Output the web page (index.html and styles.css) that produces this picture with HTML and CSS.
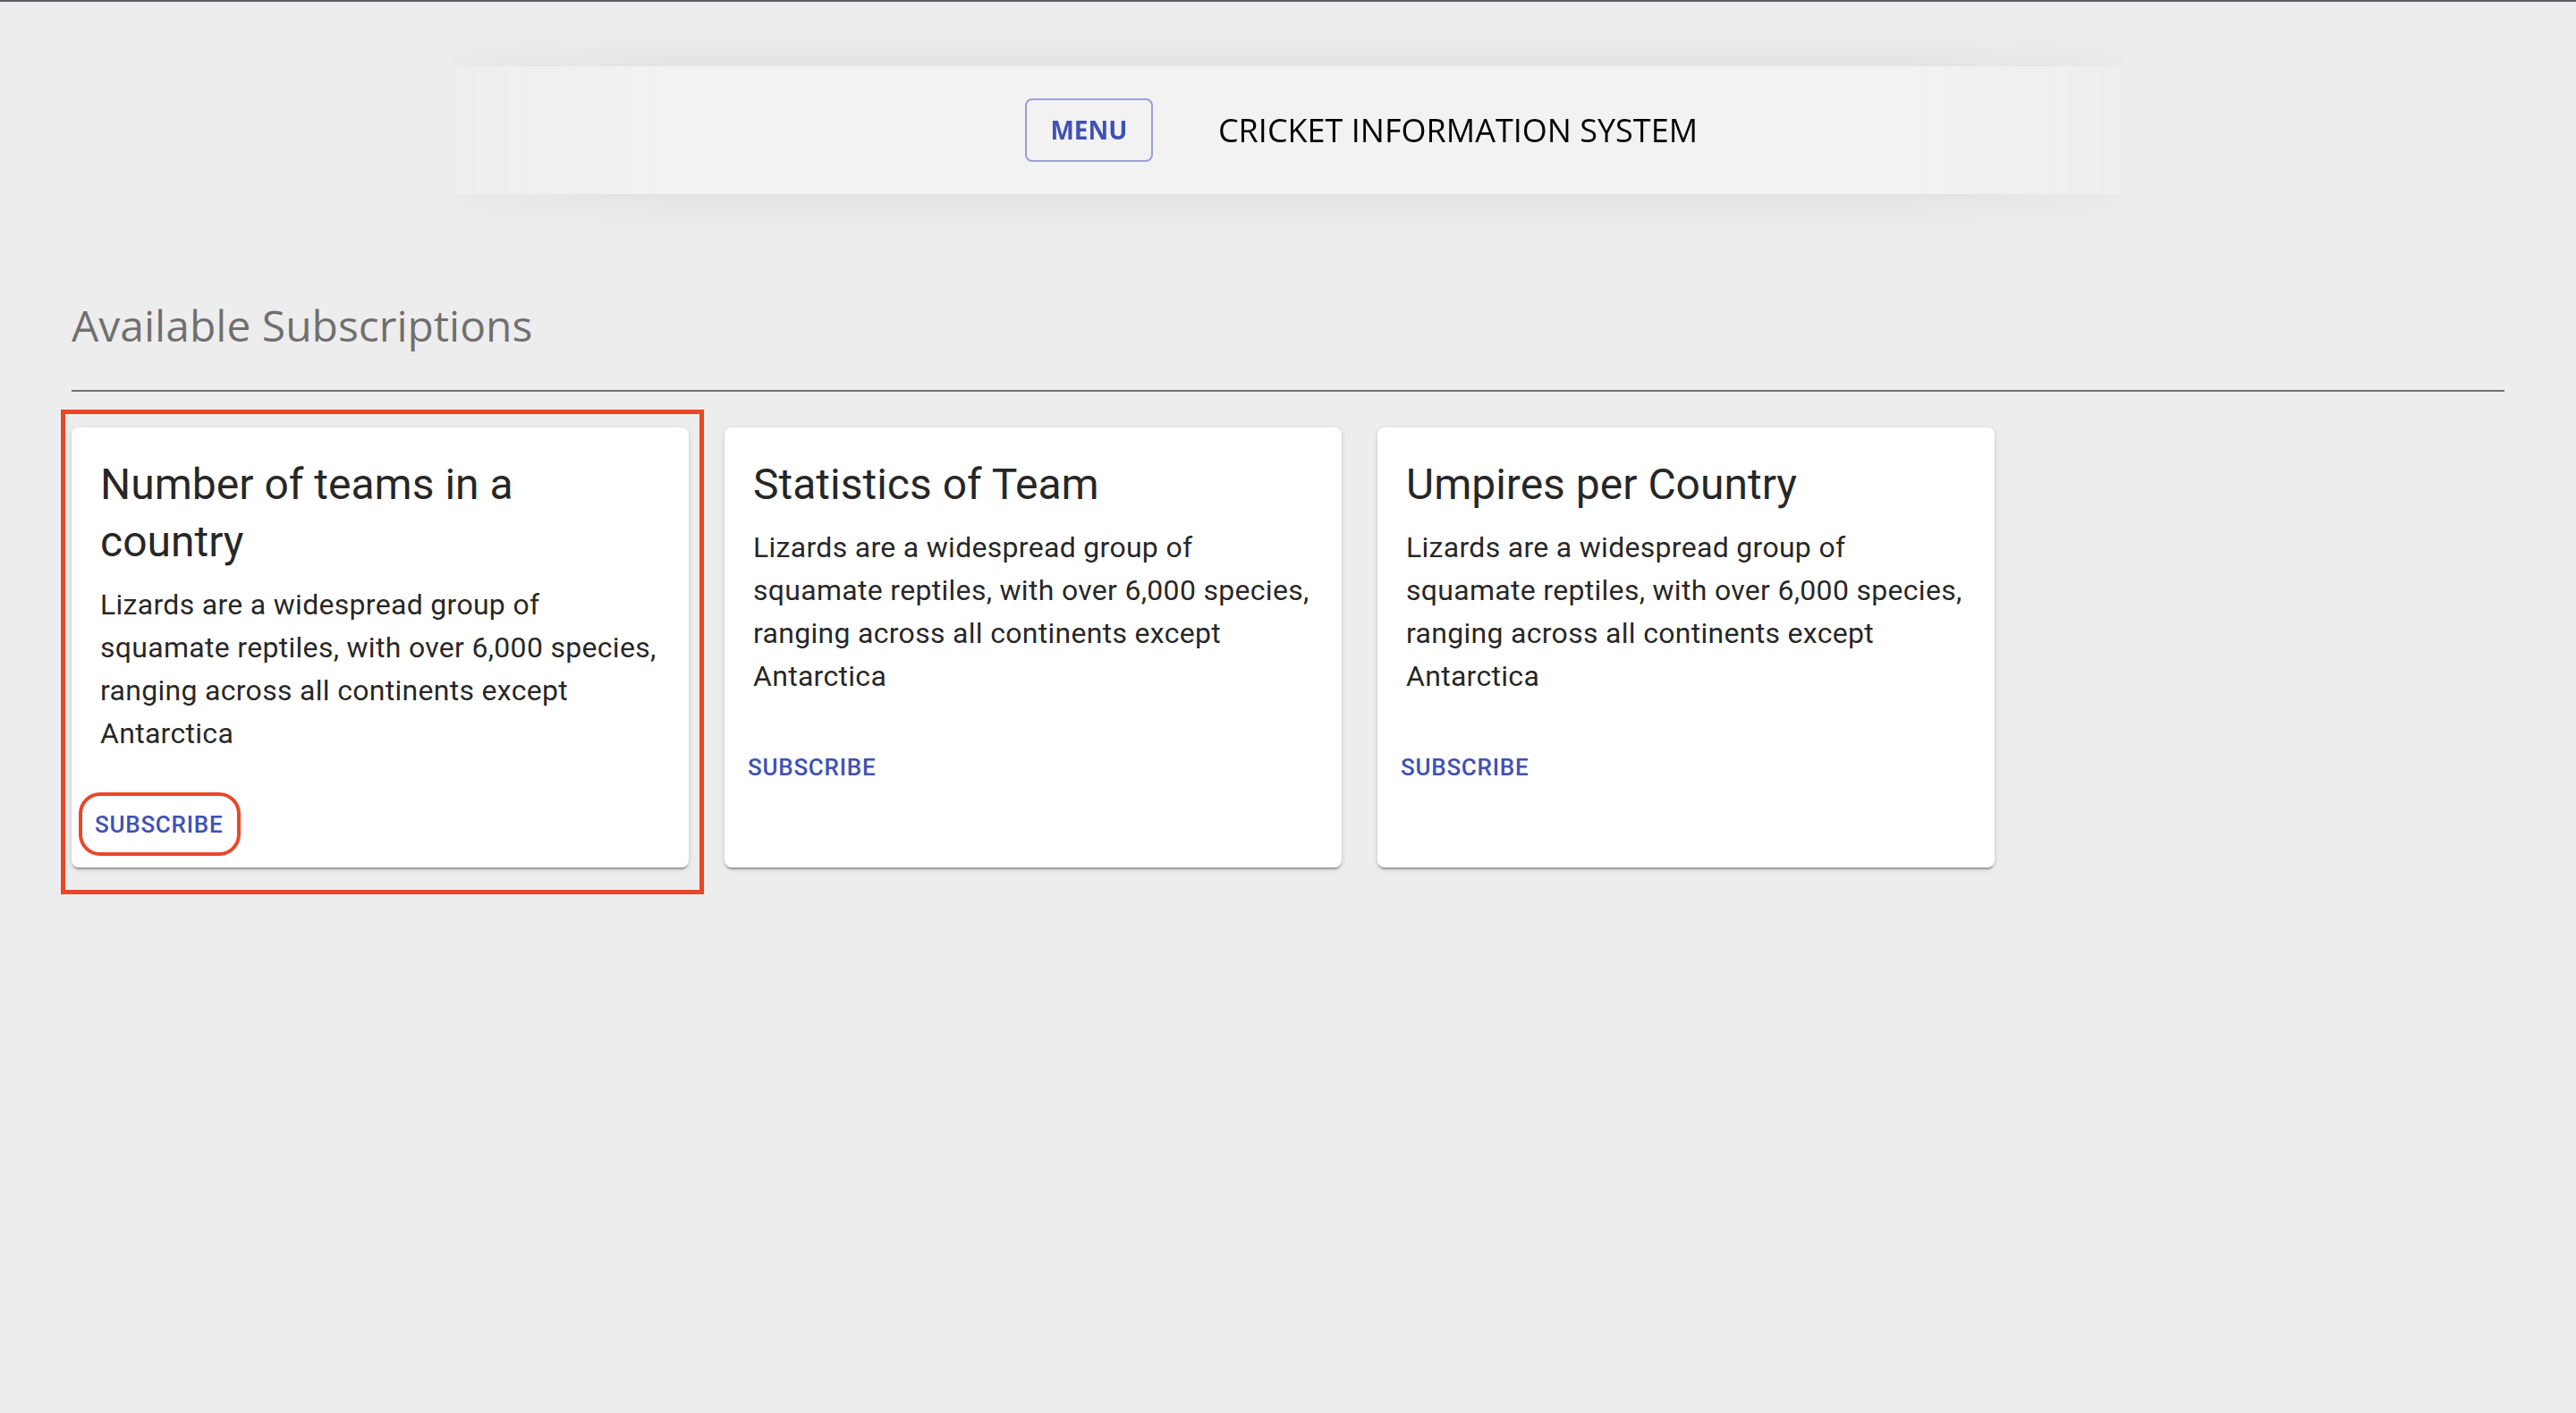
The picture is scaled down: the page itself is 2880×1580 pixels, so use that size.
FILE: index.html
```html
<!DOCTYPE html>
<html lang="en">
<head>
<meta charset="utf-8">
<title>Cricket Information System</title>
<link rel="stylesheet" href="styles.css">
</head>
<body>
  <header class="topbar-wrap">
    <div class="topbar">
      <button class="menu-btn" type="button">MENU</button>
      <h1 class="app-title">CRICKET INFORMATION SYSTEM</h1>
    </div>
  </header>

  <main class="page">
    <h2 class="section-title">Available Subscriptions</h2>
    <hr class="divider">

    <div class="cards">
      <div class="card">
        <div class="card-content">
          <h3 class="card-title">Number of teams in a country</h3>
          <p class="card-text">Lizards are a widespread group of squamate reptiles, with over 6,000 species, ranging across all continents except Antarctica</p>
        </div>
        <div class="card-actions">
          <button class="text-btn" type="button">SUBSCRIBE<span class="annot-circle"></span></button>
        </div>
        <span class="annot-rect"></span>
      </div>

      <div class="card">
        <div class="card-content">
          <h3 class="card-title">Statistics of Team</h3>
          <p class="card-text">Lizards are a widespread group of squamate reptiles, with over 6,000 species, ranging across all continents except Antarctica</p>
        </div>
        <div class="card-actions">
          <button class="text-btn" type="button">SUBSCRIBE</button>
        </div>
      </div>

      <div class="card">
        <div class="card-content">
          <h3 class="card-title">Umpires per Country</h3>
          <p class="card-text">Lizards are a widespread group of squamate reptiles, with over 6,000 species, ranging across all continents except Antarctica</p>
        </div>
        <div class="card-actions">
          <button class="text-btn" type="button">SUBSCRIBE</button>
        </div>
      </div>
    </div>
  </main>
</body>
</html>
```
FILE: styles.css
```css
html {
  background: #ededed;
}

body {
  margin: 0;
  min-height: 1578px;
  border-top: 2px solid #5f5f63;
  background: #ededed;
  font-family: "Open Sans", "Noto Sans", sans-serif;
}

/* ---------- top bar ---------- */
.topbar-wrap {
  width: 65%;
  margin: 12px auto 0;
  padding: 60px 0;
  -webkit-mask-image: linear-gradient(90deg, rgba(0,0,0,0.3) 0%, #000 14%, #000 86%, rgba(0,0,0,0.3) 100%);
  mask-image: linear-gradient(90deg, rgba(0,0,0,0.3) 0%, #000 14%, #000 86%, rgba(0,0,0,0.3) 100%);
}

.topbar {
  height: 143px;
  box-sizing: border-box;
  padding-left: 164px;
  display: flex;
  align-items: center;
  justify-content: center;
  gap: 73px;
  background: #f2f2f2;
  box-shadow: 0 0 50px rgba(0, 0, 0, 0.09);
}

.menu-btn {
  box-sizing: border-box;
  width: 143px;
  height: 71px;
  padding: 9px 0;
  border: 2px solid rgba(63, 81, 181, 0.5);
  border-radius: 8px;
  background: transparent;
  color: #3f51b5;
  font-family: "Open Sans", "Noto Sans", sans-serif;
  font-weight: 700;
  font-size: 28px;
  line-height: 49px;
  letter-spacing: 0;
  text-align: center;
  cursor: pointer;
}

.app-title {
  margin: 0;
  font-family: "Open Sans", "Noto Sans", sans-serif;
  font-weight: 400;
  font-size: 36px;
  color: #000;
}

/* ---------- page ---------- */
.page {
  padding: 55px 80px 0;
}

.section-title {
  margin: 0;
  font-family: "Open Sans", "Noto Sans", sans-serif;
  font-weight: 400;
  font-size: 48px;
  line-height: 64px;
  color: rgba(0, 0, 0, 0.54);
}

.divider {
  margin: 40px 0 0;
  border: 0;
  border-top: 2px solid #707070;
  height: 0;
}

.cards {
  margin-top: 40px;
  display: grid;
  grid-template-columns: repeat(3, 690px);
  column-gap: 40px;
}

.card {
  position: relative;
  background: #fff;
  border-radius: 8px;
  box-shadow: 0 4px 2px -2px rgba(0, 0, 0, 0.2), 0 2px 2px 0 rgba(0, 0, 0, 0.14), 0 2px 6px 0 rgba(0, 0, 0, 0.12);
  font-family: Roboto, "Liberation Sans", sans-serif;
}

.card-content {
  padding: 32px;
}

.card-title {
  margin: 0 0 14px;
  font-weight: 400;
  font-size: 48px;
  line-height: 64px;
  color: rgba(0, 0, 0, 0.87);
}

.card-text {
  margin: 0;
  font-weight: 400;
  font-size: 32px;
  line-height: 48px;
  letter-spacing: 0.3px;
  color: rgba(0, 0, 0, 0.87);
}

.card-actions {
  padding: 16px;
  display: flex;
  align-items: center;
}

.text-btn {
  position: relative;
  padding: 8px 10px;
  border: 0;
  border-radius: 8px;
  background: transparent;
  color: #3f51b5;
  font-family: Roboto, "Liberation Sans", sans-serif;
  font-weight: 500;
  font-size: 26px;
  line-height: 45.5px;
  letter-spacing: 0.74px;
  cursor: pointer;
}

/* ---------- annotations ---------- */
.annot-rect {
  position: absolute;
  left: -12px;
  top: -20px;
  right: -17px;
  bottom: -30px;
  border: 5px solid #ea4628;
  pointer-events: none;
}

.annot-circle {
  position: absolute;
  left: -8px;
  top: -6px;
  right: -10px;
  bottom: -3px;
  border: 4px solid #ea4628;
  border-radius: 24px;
  pointer-events: none;
}
```
